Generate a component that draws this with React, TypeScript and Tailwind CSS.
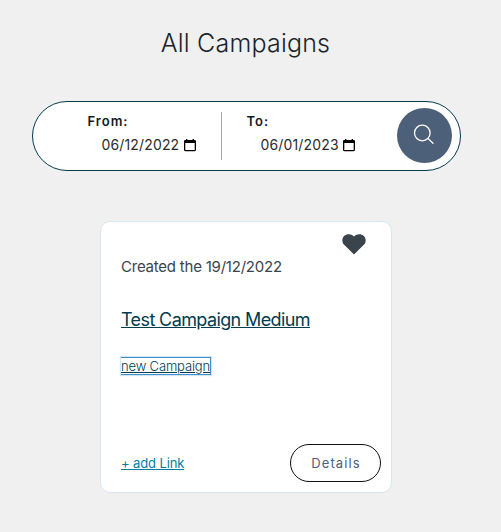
function CalendarIcon() {
  return (
    <svg width="12" height="13" viewBox="0 0 12 13" className="shrink-0">
      <path
        fillRule="evenodd"
        fill="#000"
        d="M2 0h1.4v1h5.2V0H10v1h.6C11.4 1 12 1.6 12 2.2v8.9c0 .7-.6 1.2-1.4 1.2H1.4C.6 12.300 0 11.800 0 11.100V2.200C0 1.600.6 1 1.400 1H2zM1.300 4v7h9.400V4z"
      />
    </svg>
  );
}

function DateField({ label, value, className }: { label: string; value: string; className: string }) {
  return (
    <div className={className}>
      <div className="text-[13px] leading-4 font-semibold tracking-[1px] text-[#141b1f]">{label}</div>
      <div className="mt-2 ml-3.5 flex items-center gap-1 text-sm leading-4 tracking-[0.15px] text-[#2b2b2b]">
        <span className="w-[78px] whitespace-nowrap">{value}</span>
        <CalendarIcon />
      </div>
    </div>
  );
}

export default function App() {
  return (
    <main className="flex h-[532px] w-[501px] flex-col bg-[#f0f0f0] font-['Inter','Liberation_Sans',sans-serif]">
      <h1 className="mt-[27px] w-[491px] text-center text-[25px] leading-8 font-[350] tracking-[0.2px] text-[#1b252a]">
        All Campaigns
      </h1>

      <form className="mt-[42px] ml-8 flex h-[70px] w-[429px] rounded-full border border-[#003b4f] bg-white">
        <DateField label="From:" value="06/12/2022" className="mt-[11px] ml-[54.5px] w-[133.5px]" />
        <div className="mt-2.5 h-12 w-px bg-[#a9a9a9]" />
        <DateField label="To:" value="06/01/2023" className="mt-[11px] ml-[24.5px] w-[150.5px]" />
        <button
          type="button"
          aria-label="Search"
          className="mt-1.5 flex size-[55px] shrink-0 items-center justify-center rounded-full bg-[#4c6079]"
        >
          <svg width="22" height="22" viewBox="0 0 22 22" fill="none" stroke="#fff" strokeWidth="1.3" strokeLinecap="round" className="-mt-[2px] -ml-px">
            <circle cx="9.300" cy="9" r="7.800" />
            <path d="M14.900 14.400 20 19.300" />
          </svg>
        </button>
      </form>

      <article className="mt-[50px] ml-[100px] flex h-[272px] w-[292px] flex-col rounded-[10px] border border-[#d6e7f4] bg-white px-5">
        <svg width="24" height="21" viewBox="0 0 24 21" className="mt-[12px] mr-[5px] shrink-0 self-end" fill="#3a444c">
          <path d="M12 20.500 1.900 10.600C-.3 8.200-.1 4.200 2.100 2 4.800-.5 9.200-.4 12 2.400 14.800-.4 19.200-.5 21.900 2c2.200 2.200 2.400 6.200.2 8.600z" />
        </svg>
        <p className="mt-[2px] text-[15px] leading-5 tracking-[-0.22px] text-[#3a444c]">Created the 19/12/2022</p>
        <h2 className="mt-[30px] text-lg leading-[26px] tracking-[-0.61px] text-[#003b4f]">
          <a href="#" className="underline">Test Campaign Medium</a>
        </h2>
        <a
          href="#"
          className="mt-[24px] h-[18px] self-start border border-l-0 border-[#3f8dcb] text-[13px] leading-[17px] font-light tracking-[-0.15px] text-[#003b4f] underline shadow-[0_0_1px_1px_#d3e6f5]"
        >
          new Campaign
        </a>
        <div className="mt-[69px] flex items-center justify-between">
          <a href="#" className="pt-0.5 text-[13px] tracking-[-0.12px] text-[#007fa3] underline">+ add Link</a>
          <button
            type="button"
            className="-mr-2.5 h-[38px] w-[91px] rounded-full border border-[#111] pt-0.5 pl-px text-[13px] tracking-[1.1px] text-[#4c6079]"
          >
            Details
          </button>
        </div>
      </article>
    </main>
  );
}
